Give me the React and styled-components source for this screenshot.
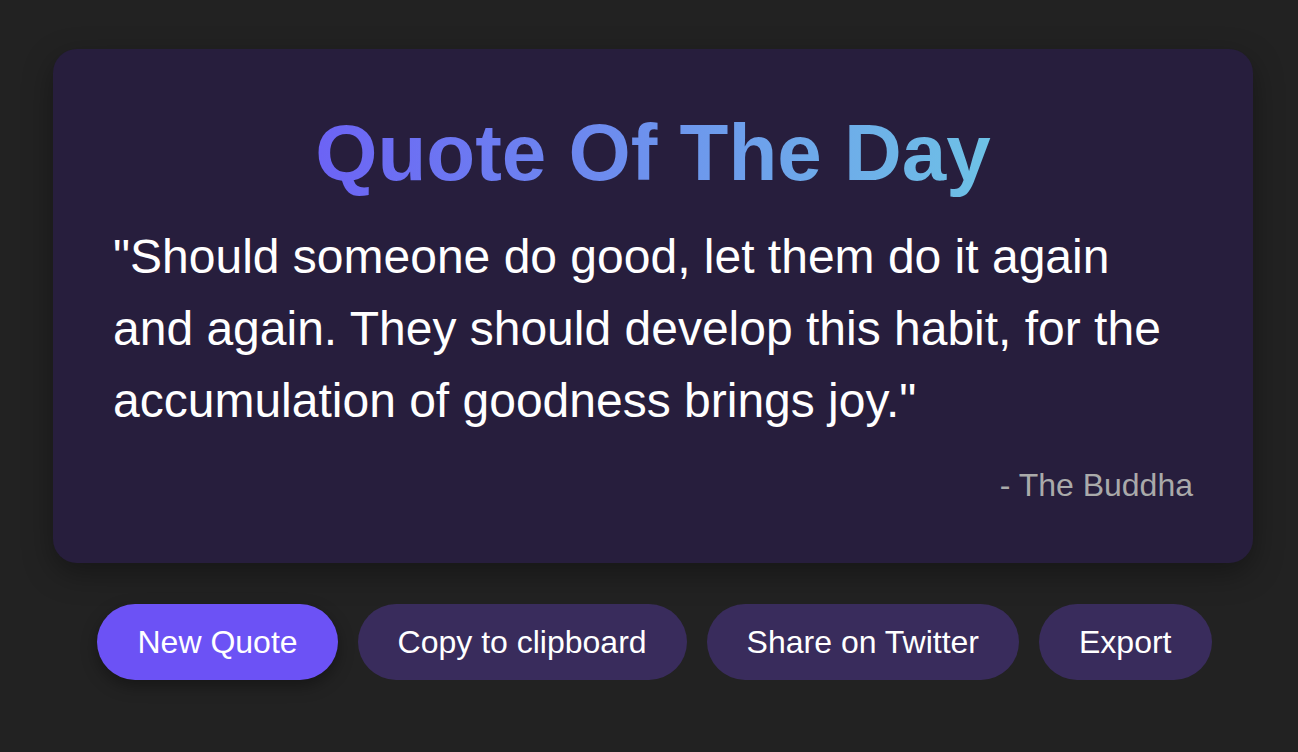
import styled, { createGlobalStyle } from 'styled-components';

const GlobalStyle = createGlobalStyle`
  html, body {
    margin: 0;
    padding: 0;
    background: #222222;
    font-family: "Liberation Sans", Arial, sans-serif;
  }
`;

const buttons = [
  { label: 'New Quote', primary: true },
  { label: 'Copy to clipboard' },
  { label: 'Share on Twitter' },
  { label: 'Export' },
];

function App() {
  return (
    <Page>
      <GlobalStyle />
      <Card>
        <Title>Quote Of The Day</Title>
        <QuoteText>
          "Should someone do good, let them do it again and again. They should develop this habit, for the accumulation of goodness brings joy."
        </QuoteText>
        <Author>- The Buddha</Author>
      </Card>
      <Actions>
        {buttons.map(b => (
          <ActionButton key={b.label} primary={b.primary}>{b.label}</ActionButton>
        ))}
      </Actions>
    </Page>
  );
}

const Page = styled.main`
  box-sizing: border-box;
  width: 1298px;
  min-height: 752px;
  padding: 49px 45px 0 53px;
  display: flex;
  flex-direction: column;
  align-items: center;
  gap: 41px;
`;
const Card = styled.section`
  box-sizing: border-box;
  width: 1200px;
  height: 514px;
  padding: 58px 60px 0;
  background: #271e3d;
  border-radius: 24px;
  box-shadow: 0 10px 30px rgba(0, 0, 0, 0.35);
  display: flex;
  flex-direction: column;
`;
const Title = styled.h1`
  margin: 0 0 22px;
  text-align: center;
  font-size: 80px;
  font-weight: 700;
  line-height: 92px;
  background: linear-gradient(90deg, #6c63f5 0%, #6ec2e6 100%);
  background-clip: text;
  -webkit-background-clip: text;
  color: transparent;
  width: fit-content;
  align-self: center;
`;
const QuoteText = styled.p`
  margin: 0;
  color: #ffffff;
  font-size: 48px;
  line-height: 72px;
`;
const Author = styled.p`
  margin: 30px 0 0;
  text-align: right;
  color: #aaaaaa;
  font-size: 32px;
  line-height: 37px;
`;
const Actions = styled.div`
  display: flex;
  gap: 20px;
  justify-content: center;
  padding-left: 3px;
`;
const ActionButton = styled.button`
  border: none;
  border-radius: 40px;
  padding: 20px 40px;
  font-family: "Liberation Sans", Arial, sans-serif;
  font-size: 32px;
  line-height: 36px;
  color: #ffffff;
  cursor: pointer;
  background: ${props => props.primary ? '#6c52f5' : '#392c5c'};
  box-shadow: ${props => props.primary ? '0 6px 16px rgba(0, 0, 0, 0.35)' : 'none'};
`;

export default App;
